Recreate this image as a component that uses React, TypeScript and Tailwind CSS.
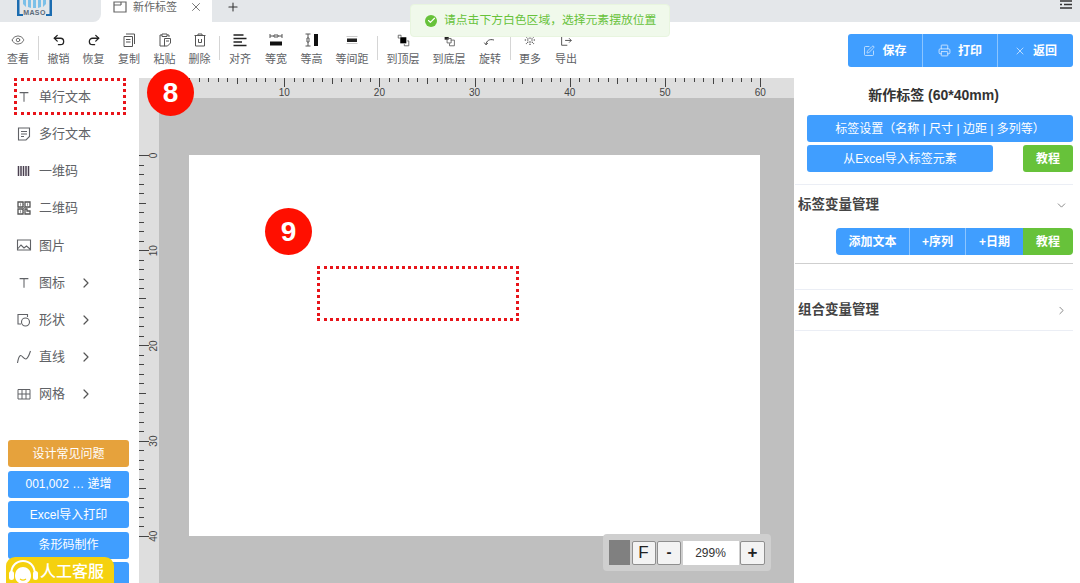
import { ReactNode } from "react"
import { Check, ChevronDown, ChevronRight, Eye, Plus, Printer, Redo2, SquarePen, Undo2, X } from "lucide-react"

function Svg({ children, size = 16 }: { children: ReactNode; size?: number }) {
  return (
    <svg width={size} height={size} viewBox="0 0 16 16" fill="none" stroke="currentColor" strokeWidth="1">
      {children}
    </svg>
  )
}

const toolbar: { label: string; width: string; icon: ReactNode; sep?: boolean }[] = [
  { label: "查看", width: "w-[36px]", sep: true, icon: <Eye size={14} strokeWidth={1.4} className="text-[#555]" /> },
  { label: "撤销", width: "w-[35px]", icon: <Undo2 size={14} strokeWidth={2.2} className="text-[#222]" /> },
  { label: "恢复", width: "w-[35px]", icon: <Redo2 size={14} strokeWidth={2.2} className="text-[#222]" /> },
  {
    label: "复制",
    width: "w-[36px]",
    icon: (
      <Svg>
        <path d="M3 4.5h8.5v10H3zM5 2h8.5v10M5 7.5h4.5M5 10h4.5" />
      </Svg>
    ),
  },
  {
    label: "粘贴",
    width: "w-[35px]",
    icon: (
      <Svg>
        <path d="M5 3H3v11h5M5 2h5v2.5H5zM10 3h2v2M7.5 6.5h6V11l-3 3h-3zM9 9h3" />
      </Svg>
    ),
  },
  {
    label: "删除",
    width: "w-[35px]",
    sep: true,
    icon: (
      <Svg>
        <path d="M2.5 3.5h11M6 3.5V2h4v1.5M3.5 3.5V14h9V3.5M6.5 7v3.5h3V7" />
      </Svg>
    ),
  },
  {
    label: "对齐",
    width: "w-[36px]",
    icon: (
      <Svg>
        <path strokeWidth="1.6" stroke="#222" d="M1.5 3h10M1.5 6.5h13M1.5 10h8.5M1.5 13.5h13" />
      </Svg>
    ),
  },
  {
    label: "等宽",
    width: "w-[36px]",
    icon: (
      <Svg>
        <path d="M2 2v4M14 2v4M2 4h4M10 4h4M6 3h4v2H6z" stroke="#555" />
        <rect x="2" y="9.5" width="12" height="4" fill="#111" stroke="none" />
      </Svg>
    ),
  },
  {
    label: "等高",
    width: "w-[35px]",
    icon: (
      <Svg>
        <path d="M1.5 2h5M1.5 14h5M4 2v4M4 10v4M3 6h2v4H3z" stroke="#555" />
        <rect x="10" y="2" width="4" height="12" fill="#111" stroke="none" />
      </Svg>
    ),
  },
  {
    label: "等间距",
    width: "w-[46px]",
    sep: true,
    icon: (
      <Svg>
        <path d="M2.5 4.5h11M2.5 11.5h11" stroke="#ccc" />
        <rect x="3" y="6.5" width="10" height="3.5" fill="#222" stroke="none" />
      </Svg>
    ),
  },
  {
    label: "到顶层",
    width: "w-[46px]",
    icon: (
      <Svg size={13}>
        <path d="M5 3.5V1.5H1.5V5h2M12.5 8.5h2v6H9v-2" stroke="#555" />
        <rect x="4" y="4" width="7.5" height="7.5" fill="#000" stroke="none" />
      </Svg>
    ),
  },
  {
    label: "到底层",
    width: "w-[46px]",
    icon: (
      <Svg size={13}>
        <rect x="2" y="2" width="5" height="5" fill="#222" stroke="none" />
        <path d="M5 5.5h5V11H5zM9.5 7.5h4.5v7H8v-3" stroke="#555" />
      </Svg>
    ),
  },
  {
    label: "旋转",
    width: "w-[36px]",
    sep: true,
    icon: (
      <Svg size={14}>
        <path d="M3.5 13C4 9 7 6.5 12.5 8M1.5 11l2 2.5 2-2" stroke="#444" strokeWidth="1.1" />
      </Svg>
    ),
  },
  {
    label: "更多",
    width: "w-[34px]",
    icon: (
      <Svg size={14}>
        <path
          strokeDasharray="1.5 1.2"
          stroke="#333"
          strokeWidth="1.2"
          d="M8 2.5v4M8 9.500v5M2 8h4.500M9.500 8h4.500M3.500 4l2.500 2.500M10 10l2.500 2.500M12.500 4L10 6.500M6 10l-2.500 2.500"
        />
      </Svg>
    ),
  },
  {
    label: "导出",
    width: "w-[38px]",
    icon: (
      <Svg size={14}>
        <path d="M9 3H3v11h6.500M7 8.500h7M11.500 6l2.500 2.500-2.500 2.500" stroke="#444" />
      </Svg>
    ),
  },
]

const shapes: { label: string; arrow?: boolean; icon: ReactNode }[] = [
  {
    label: "单行文本",
    icon: (
      <Svg size={14}>
        <path d="M3 3h10M8 3v10.5" strokeWidth="1.2" />
      </Svg>
    ),
  },
  {
    label: "多行文本",
    icon: (
      <Svg>
        <path d="M2.5 2h11v8.500L10 14H2.500zM5 5.500h6M5 8h6M5 10.500h3" strokeWidth="1.1" />
      </Svg>
    ),
  },
  {
    label: "一维码",
    icon: (
      <Svg>
        <path d="M2.5 3v10M5 3v10M7.500 3v10M10 3v10M12.500 3v10" strokeWidth="1.5" stroke="#4a4050" />
      </Svg>
    ),
  },
  {
    label: "二维码",
    icon: (
      <Svg>
        <path d="M2 2h5v5H2zM9 2h5v5H9zM2 9h5v5H2zM9 9h2v2h3v3H9z" strokeWidth="1.3" stroke="#555" />
        <path d="M4 4h1v1H4zM11 4h1v1h-1zM4 11h1v1H4zM7.500 2v12M2 7.500h12" strokeWidth="1" stroke="#777" strokeDasharray="1 1" />
      </Svg>
    ),
  },
  {
    label: "图片",
    icon: (
      <Svg>
        <path d="M1.5 3h13v10h-13zM2 11.500l3-3.500 3 3 2.500-2 3.500 3" strokeWidth="1.1" />
      </Svg>
    ),
  },
  {
    label: "图标",
    arrow: true,
    icon: (
      <Svg size={14}>
        <path d="M3 3h10M8 3v10.5" strokeWidth="1.2" />
      </Svg>
    ),
  },
  {
    label: "形状",
    arrow: true,
    icon: (
      <Svg>
        <path d="M5 12H2V2.500h9.500V5" strokeWidth="1.1" />
        <circle cx="9.5" cy="10" r="4" strokeWidth="1.1" />
      </Svg>
    ),
  },
  {
    label: "直线",
    arrow: true,
    icon: (
      <Svg>
        <path d="M1.500 14c.5-3 1.500-7 3-7.500S8 10.500 10 10s3.500-5 4.500-8" strokeWidth="1.1" />
      </Svg>
    ),
  },
  {
    label: "网格",
    arrow: true,
    icon: (
      <Svg>
        <path d="M2 3.500h12v9.500H2zM2 8h12M6 3.500V13M10 3.500V13" strokeWidth="1" />
      </Svg>
    ),
  },
]

const quickLinks = [
  { label: "设计常见问题", color: "bg-[#e6a23c]" },
  { label: "001,002 … 递增", color: "bg-[#409eff]" },
  { label: "Excel导入打印", color: "bg-[#409eff]" },
  { label: "条形码制作", color: "bg-[#409eff]" },
  { label: "", color: "bg-[#409eff]" },
]

const MM = 9.52
const ticksX = Array.from({ length: 61 }, (_, i) => i)
const ticksY = Array.from({ length: 41 }, (_, i) => i)

function tickLen(i: number, major: number, mid: number, minor: number) {
  if (i % 10 === 0) return major
  if (i % 5 === 0) return mid
  return minor
}

function TopRuler() {
  return (
    <svg width="655" height="20" className="block bg-[#dedede] shrink-0">
      {ticksX.map((i) => {
        const x = Math.round(50 + i * MM) + 0.5
        return <line key={i} x1={x} x2={x} y1={0} y2={tickLen(i, 9, 6, 4)} stroke="#444" shapeRendering="crispEdges" />
      })}
      {ticksX
        .filter((i) => i % 10 === 0)
        .map((i) => (
          <text key={i} x={50 + i * MM} y={18} fontSize="10" textAnchor="middle" fill="#444">
            {i}
          </text>
        ))}
    </svg>
  )
}

function LeftRuler() {
  return (
    <svg width="20" height="485" className="block bg-[#dedede] shrink-0">
      {ticksY.map((i) => {
        const y = Math.round(57 + i * MM) + 0.5
        return <line key={i} x1={0} x2={tickLen(i, 10, 7, 5)} y1={y} y2={y} stroke="#444" shapeRendering="crispEdges" />
      })}
      {ticksY
        .filter((i) => i % 10 === 0)
        .map((i) => (
          <text
            key={i}
            x={0}
            y={0}
            fontSize="10"
            textAnchor="middle"
            fill="#444"
            transform={`translate(17.5 ${57.5 + i * MM}) rotate(-90)`}
          >
            {i}
          </text>
        ))}
    </svg>
  )
}

function Badge({ n, className }: { n: number; className: string }) {
  return (
    <div className={`absolute w-[47px] h-[47px] rounded-full bg-[#ff0f00] flex items-center justify-center text-white text-[28px] font-bold ${className}`}>
      {n}
    </div>
  )
}

function ZoomButton({ children, className }: { children: ReactNode; className: string }) {
  return (
    <div className={`h-[24px] flex items-center justify-center bg-[#f3f3f3] border border-[#8f8f8f] rounded-[2px] text-[#222] ${className}`}>
      {children}
    </div>
  )
}

export default function App() {
  return (
    <div className="relative w-[1080px] h-[583px] overflow-hidden bg-white font-['Liberation_Sans','Noto_Sans_CJK_SC',sans-serif]">
      {/* Tabs */}
      <div className="flex h-[22px]">
        <div className="w-[101px] bg-[#e4e7ea] rounded-br-[8px] overflow-hidden pl-[17px]">
          <svg width="35" height="16" viewBox="0 0 35 16">
            <path d="M0 0h2.500v16H0zM32.500 0H35v16h-2.500zM2 14h4v2H2zM29 14h4v2h-4z" fill="#1b6cb0" />
            <path d="M6 0h3v7L6 4zM11 0h3v8l-3-1zM16 0h3v8h-3zM21 0h3v7l-3 1zM26 0h3v4l-3 3z" fill="#7cc0e8" />
            <text x="17.5" y="14.5" fontSize="7" fontWeight="700" textAnchor="middle" fill="#5b6b7a" letterSpacing=".4">
              MASO
            </text>
          </svg>
        </div>
        <div className="w-[111px] flex items-center text-[#666] bg-white">
          <svg width="14" height="14" viewBox="0 0 14 14" fill="none" stroke="#666" strokeWidth="1.2" className="ml-[12px] -mt-[8px]">
            <path d="M1 2h12v10H1zM1 5h7M8 2v3" />
          </svg>
          <span className="ml-[6px] text-[11px] -mt-[7px]">新作标签</span>
          <X size={14} strokeWidth={1.5} className="ml-[12px] -mt-[9px] text-[#666]" />
        </div>
        <div className="flex-1 bg-[#e4e7ea] flex pl-[14px] relative">
          <Plus size={14} strokeWidth={1.8} className="text-[#333]" />
          <svg width="12" height="10" viewBox="0 0 12 10" className="absolute right-[8px] top-0" fill="none" stroke="#333" strokeWidth="1.5">
            <path d="M0 1h12M4 4.500h8M0 8h12M0 4.500h2" />
          </svg>
        </div>
      </div>

      <div className="flex h-[561px]">
        <div className="w-[794px] flex flex-col">
          {/* Toolbar */}
          <div className="h-[56px] flex items-start pt-[10px] shrink-0">
            {toolbar.map((t) => (
              <div key={t.label} className="flex items-start">
                <div className={`${t.width} flex flex-col items-center`}>
                  <div className="h-[16px] flex items-center justify-center text-[#555]">{t.icon}</div>
                  <div className="mt-[3px] text-[11px] leading-[16px] text-[#606266] whitespace-nowrap">{t.label}</div>
                </div>
                {t.sep && <div className="w-px h-[24px] mx-[2px] mt-[4px] bg-[#d5d5d5]" />}
              </div>
            ))}
          </div>

          <div className="flex flex-1 min-h-0">
            {/* Sidebar */}
            <div className="w-[139px] shrink-0">
              <div className="h-[362px] relative">
                {shapes.map((s) => (
                  <div key={s.label} className="h-[37.2px] pl-[16px] flex items-center text-[#606266]">
                    <div className="w-[16px] flex justify-center">{s.icon}</div>
                    <span className="ml-[7px] text-[13px] w-[46px] whitespace-nowrap">{s.label}</span>
                    {s.arrow && <ChevronRight size={16} strokeWidth={1.8} className="-ml-[7px] text-[#555]" />}
                  </div>
                ))}
                <div className="absolute left-[14px] top-0 w-[112px] h-[37px] border-[3px] border-dotted border-[#e8141a]" />
              </div>
              <div className="flex flex-col gap-[3.5px] pl-[8px] pr-[10px]">
                {quickLinks.map((q, i) => (
                  <div key={i} className={`${q.color} h-[27px] shrink-0 rounded-[3px] flex items-center justify-center text-white text-[12px]`}>
                    {q.label}
                  </div>
                ))}
              </div>
            </div>

            {/* Canvas */}
            <div className="flex-1 relative flex flex-col min-w-0">
              <TopRuler />
              <div className="flex flex-1 min-h-0">
                <LeftRuler />
                <div className="flex-1 bg-[#bfbfbf] pl-[30px] pt-[57px]">
                  <div className="relative w-[571px] h-[381px] bg-white">
                    <div className="absolute left-[128px] top-[111px] w-[202px] h-[55px] border-[3px] border-dotted border-[#e8141a]" />
                  </div>
                </div>
              </div>
              <div className="absolute right-[23px] bottom-[12px] w-[168px] h-[37px] rounded-[4px] bg-[#cfcfcf] flex items-center pl-[6px] gap-[1.5px]">
                <div className="w-[21px] h-[25px] bg-[#808080]" />
                <ZoomButton className="w-[24px] text-[17px]">F</ZoomButton>
                <ZoomButton className="w-[24px] text-[15px] font-bold">-</ZoomButton>
                <div className="w-[56px] h-[24px] bg-white flex items-center justify-center text-[12px] text-[#333]">299%</div>
                <ZoomButton className="w-[25px] text-[17px] font-bold">+</ZoomButton>
              </div>
            </div>
          </div>
        </div>

        {/* Right panel */}
        <div className="flex-1 min-w-0 pt-[12px] pr-[7px]">
          <div className="ml-[54px] h-[33px] flex rounded-[3px] overflow-hidden bg-[#409eff] text-white text-[12px] font-bold">
            <div className="w-[75px] flex items-center justify-center gap-[7px] border-r border-[#8cc5ff]">
              <SquarePen size={12} strokeWidth={1.5} className="text-[#e0efff]" />
              保存
            </div>
            <div className="w-[75px] flex items-center justify-center gap-[7px] border-r border-[#8cc5ff]">
              <Printer size={13} strokeWidth={1.5} className="text-[#e0efff]" />
              打印
            </div>
            <div className="flex-1 flex items-center justify-center gap-[7px]">
              <X size={12} strokeWidth={1.5} className="text-[#e0efff]" />
              返回
            </div>
          </div>

          <div className="mt-[18px] text-center text-[14px] leading-[20px] font-bold text-[#333]">新作标签 (60*40mm)</div>

          <div className="mt-[10px] ml-[13px] h-[27px] rounded-[3px] bg-[#409eff] text-white text-[12px] flex items-center justify-center">
            标签设置（名称 | 尺寸 | 边距 | 多列等）
          </div>
          <div className="mt-[3px] ml-[13px] flex justify-between">
            <div className="w-[186px] h-[27px] rounded-[3px] bg-[#409eff] text-white text-[12px] flex items-center justify-center">从Excel导入标签元素</div>
            <div className="w-[50px] h-[27px] rounded-[3px] bg-[#67c23a] text-white text-[12px] font-bold flex items-center justify-center">教程</div>
          </div>

          <div className="mt-[12px] ml-px border-t border-[#ebeef5] h-[41px] pl-[3px] flex items-center justify-between text-[13.5px] font-bold text-[#444]">
            标签变量管理
            <ChevronDown size={13} strokeWidth={1.4} className="mr-[5px] text-[#666]" />
          </div>
          <div className="mt-[3px] ml-[42px] h-[27px] flex rounded-[4px] overflow-hidden text-white text-[12px] font-bold">
            <div className="w-[74px] bg-[#409eff] border-r border-[#8cc5ff] flex items-center justify-center">添加文本</div>
            <div className="w-[56px] bg-[#409eff] border-r border-[#8cc5ff] flex items-center justify-center">+序列</div>
            <div className="w-[57px] bg-[#409eff] flex items-center justify-center">+日期</div>
            <div className="flex-1 bg-[#67c23a] flex items-center justify-center">教程</div>
          </div>
          <div className="mt-[8px] ml-px h-[26px] border-t border-[#cfcfcf]" />
          <div className="ml-px h-[42px] pl-[3px] border-y border-[#ebeef5] flex items-center justify-between text-[13.5px] font-bold text-[#444]">
            组合变量管理
            <ChevronRight size={13} strokeWidth={1.4} className="mr-[5px] text-[#666]" />
          </div>
        </div>
      </div>

      {/* Overlays */}
      <Badge n={8} className="left-[147px] top-[69px]" />
      <Badge n={9} className="left-[265px] top-[208px]" />

      <div className="absolute left-[410px] top-[4px] w-[260px] h-[33px] rounded-[4px] bg-[#f0f9eb] border border-[#e8f5df] flex items-center pl-[14px] text-[11.8px] text-[#67c23a]">
        <span className="w-[12px] h-[12px] rounded-full bg-[#67c23a] flex items-center justify-center">
          <Check size={9} strokeWidth={3} className="text-white" />
        </span>
        <span className="ml-[7px]">请点击下方白色区域，选择元素摆放位置</span>
      </div>

      <div className="absolute left-[6px] top-[557px] w-[108px] h-[26px] rounded-t-[9px] bg-[#f5d10f] flex items-start pl-[2px] overflow-hidden">
        <svg width="32" height="26" viewBox="0 0 32 26" className="shrink-0 mt-px">
          <path d="M3 17C3 7 9 3 15 3s12 4 12 14" fill="none" stroke="#fff" strokeWidth="2" />
          <path d="M7 18c0-6 4-9 8-9s8 3 8 9c0 5-4 8-8 8s-8-3-8-8z" fill="#fff" />
          <rect x="1" y="13" width="5" height="9" rx="2.5" fill="#fff" />
          <rect x="25" y="13" width="5" height="9" rx="2.5" fill="#fff" />
          <path d="M12 21c2 1.500 4 1.500 6 0" fill="none" stroke="#f5d10f" strokeWidth="1.2" />
        </svg>
        <span className="text-[16px] leading-[30px] text-white font-medium whitespace-nowrap">人工客服</span>
      </div>
    </div>
  )
}
